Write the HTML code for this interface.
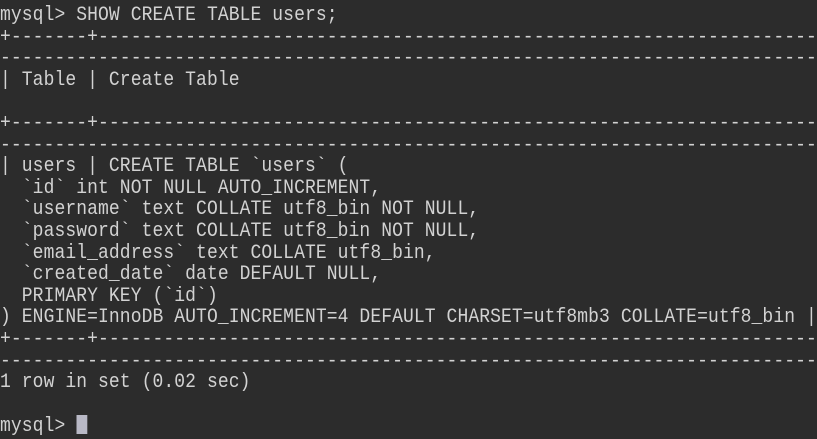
<!DOCTYPE html>
<html><head><meta charset="utf-8"><style>
html,body{margin:0;padding:0;background:#2c2c2c;width:817px;height:439px;overflow:hidden}
pre{margin:0;padding:5px 0 0 0;font-family:"Liberation Mono",monospace;font-size:20px;letter-spacing:0.1px;line-height:21.6px;color:#d2d2d2;white-space:pre;overflow:hidden;width:910px;transform:scaleX(0.9);transform-origin:0 0}
.cur{display:inline-block;width:12px;height:19px;background:#b9b9c6;vertical-align:-3px}
</style></head><body><pre>mysql&gt; SHOW CREATE TABLE users;
+-------+----------------------------------------------------------------------------------
----------------------------------------------------------------------------------
| Table | Create Table

+-------+----------------------------------------------------------------------------------
----------------------------------------------------------------------------------
| users | CREATE TABLE `users` (
  `id` int NOT NULL AUTO_INCREMENT,
  `username` text COLLATE utf8_bin NOT NULL,
  `password` text COLLATE utf8_bin NOT NULL,
  `email_address` text COLLATE utf8_bin,
  `created_date` date DEFAULT NULL,
  PRIMARY KEY (`id`)
) ENGINE=InnoDB AUTO_INCREMENT=4 DEFAULT CHARSET=utf8mb3 COLLATE=utf8_bin |
+-------+----------------------------------------------------------------------------------
----------------------------------------------------------------------------------
1 row in set (0.02 sec)

mysql&gt; <span class="cur"></span></pre></body></html>
